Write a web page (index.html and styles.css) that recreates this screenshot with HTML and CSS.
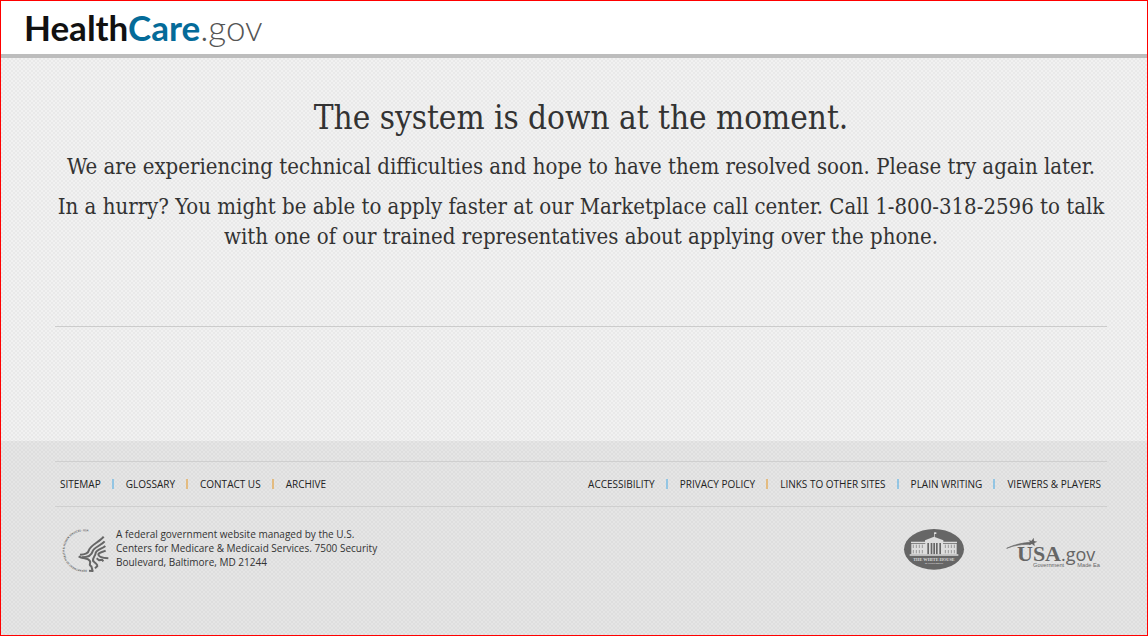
FILE: index.html
```
<!DOCTYPE html>
<html lang="en">
  <head>
    <meta charset="utf-8" />
    <title>HealthCare.gov</title>
    <meta name="viewport" content="width=device-width, initial-scale=1" />
    <link rel="stylesheet" href="styles.css">
  </head>
  <body>
    <header class="header">
      <a class="logo" href="#"><span class="logo-health">Health</span><span class="logo-care">Care</span><span class="logo-gov">.gov</span></a>
    </header>

    <main class="main">
      <div class="message">
        <h1>The system is down at the moment.</h1>
        <p>We are experiencing technical difficulties and hope to have them resolved soon. Please try again later.</p>
        <p>In a hurry? You might be able to apply faster at our Marketplace call center. Call 1-800-318-2596 to talk with one of our trained representatives about applying over the phone.</p>
      </div>
    </main>

    <footer class="footer">
      <nav class="footer-nav">
        <ul class="links">
          <li><a href="#">Sitemap</a></li>
          <li><a href="#">Glossary</a></li>
          <li class="orange"><a href="#">Contact Us</a></li>
          <li class="orange"><a href="#">Archive</a></li>
        </ul>
        <ul class="links">
          <li><a href="#">Accessibility</a></li>
          <li><a href="#">Privacy Policy</a></li>
          <li class="orange"><a href="#">Links to Other Sites</a></li>
          <li><a href="#">Plain Writing</a></li>
          <li><a href="#">Viewers &amp; Players</a></li>
        </ul>
      </nav>

      <div class="footer-info">
        <!-- HHS seal -->
        <svg class="hhs" viewBox="36 36 144 138" role="img" aria-label="Department of Health and Human Services">
          <path id="ring" d="M110 164 A58 58 0 1 1 146 69" fill="none" />
          <text class="ring-text"><textPath href="#ring">DEPARTMENT OF HEALTH &amp; HUMAN SERVICES · USA</textPath></text>
          <g fill="none" stroke="#666" stroke-width="6" stroke-linejoin="round">
            <path d="M161 65 C150 80 121 91 117 105 C115 114 109 119 90 119" />
            <path d="M164 79 C154 91 131 97 128 109 C125 122 116 127 96 127" />
            <path d="M166 93 C157 101 139 105 137 114 C136 124 126 130 129 139" />
            <path d="M167 107 C158 111 147 111 145 118 C145 125 151 129 175 130" />
            <path d="M86 124 C98 132 113 127 119 137 C125 145 113 149 124 154 L128 168 L117 167" />
            <path d="M129 136 C134 146 142 145 142 153 L135 160 M140 130 L147 136 L156 134 L160 139" />
          </g>
        </svg>
        <p class="address">A federal government website managed by the U.S. Centers for Medicare &amp; Medicaid Services. 7500 Security Boulevard, Baltimore, MD 21244</p>

        <!-- White House -->
        <a class="white-house" href="#" aria-label="The White House">
          <svg viewBox="27 28 180 123">
            <ellipse cx="117" cy="89" rx="90" ry="61" fill="#666" />
            <g fill="#ddd">
              <path d="M118 38 h6 v5 h-5 v10 h-2 v-14 z" />
              <path d="M90 62 L117 51 L145 62 V68 H90 Z" />
              <path d="M48 66 H186 V70 H48 Z M49 72 H93 V104 H49 Z M141 72 H185 V104 H141 Z" />
              <path d="M91 68 H97 V104 H91 Z M102 68 H107 V104 H102 Z M112 68 H115 V104 H112 Z M120 68 H123 V104 H120 Z M128 68 H133 V104 H128 Z M138 68 H144 V104 H138 Z" />
              <path d="M44 104 H190 V108 H44 Z" />
            </g>
            <path d="M55 75 V85 M64 75 V85 M73 75 V85 M82 75 V85 M55 91 V101 M64 91 V101 M73 91 V101 M82 91 V101 M151 75 V85 M160 75 V85 M169 75 V85 M178 75 V85 M151 91 V101 M160 91 V101 M169 91 V101 M178 91 V101" stroke="#999" stroke-width="3" />
            <text x="117" y="123" class="wh-name">THE WHITE HOUSE</text>
            <text x="117" y="134" class="wh-city">WASHINGTON</text>
          </svg>
        </a>

        <!-- USA.gov -->
        <a class="usa-gov" href="#" aria-label="USA.gov">
          <svg viewBox="18 24 285 90">
            <path d="M20 55 C45 43 70 38 94 37 L91 43 C65 42 43 46 20 55 Z" fill="#666" stroke="#666" stroke-width="2" />
            <path d="M101 23 L102 33 L112 35 L103 39 L104 49 L96 42 L87 46 L91 37 L85 31 L95 32 Z" fill="#666" />
            <text x="51" y="93" class="usa">USA</text>
            <text x="183" y="93" class="gov">.gov</text>
            <text x="99" y="110" class="tagline">Government</text>
            <text x="232" y="110" class="tagline">Made Ea</text>
          </svg>
        </a>
      </div>
    </footer>
  </body>
</html>
```

FILE: styles.css
```
* {
  padding: 0;
  margin: 0;
  box-sizing: border-box;
}
body {
  display: flex;
  flex-direction: column;
  min-height: 100vh;
  border: 1px solid #ff0000;
  background-color: #f1f1f1;
  color: #333333;
  font-family: "Open Sans", sans-serif;
}
a {
  color: inherit;
  text-decoration: none;
}
.header {
  height: 57px;
  padding: 6px 23px 0;
  background-color: #ffffff;
  border-bottom: 4px solid #bdbdbd;
}
.logo {
  display: block;
  font-family: Lato, sans-serif;
  font-size: 35px;
  line-height: 40px;
}
.logo-health {
  color: #111111;
  font-weight: 700;
}
.logo-care {
  color: #046b99;
  font-weight: 700;
}
.logo-gov {
  color: #555555;
  font-weight: 300;
}
/* fine woven texture */
.main,
.footer {
  background-image: repeating-conic-gradient(rgba(0, 0, 0, 0.03) 0 25%, transparent 0 50%);
  background-size: 4px 4px;
}
.main {
  padding: 36px 40px 114px 54px;
}
.message {
  padding-bottom: 74px;
  border-bottom: 1px solid #cccccc;
  font-family: "DejaVu Serif Condensed", "DejaVu Serif", serif;
  font-stretch: condensed;
  text-align: center;
}
h1 {
  font-size: 33px;
  line-height: 48px;
  font-weight: 400;
  margin-bottom: 10px;
}
.message p {
  font-size: 22px;
  line-height: 30px;
}
.message p + p {
  margin-top: 10px;
}
.footer {
  flex: 1;
  padding: 20px 40px 20px 54px;
  background-color: #e5e5e5;
}
.footer-nav {
  display: flex;
  justify-content: space-between;
  padding: 15px 6px 15px 5px;
  border-top: 1px solid #cfcfcf;
  border-bottom: 1px solid #cfcfcf;
}
.links {
  display: flex;
  list-style: none;
  color: #222222;
  font-size: 10px;
  line-height: 14px;
  text-transform: uppercase;
}
.links li + li::before {
  content: "";
  display: inline-block;
  width: 2px;
  height: 10px;
  margin: 0 12px 0 11px;
  vertical-align: -1px;
  background-color: #93c5e3;
}
.links li.orange::before {
  background-color: #e3bb80;
}
.footer-info {
  display: flex;
  align-items: flex-start;
  padding: 20px 6px 0 5px;
}
.footer-info svg {
  display: block;
  width: 100%;
  overflow: visible;
}
.footer-info .hhs {
  width: 48px;
  margin: 0 6px 0 2px;
}
.ring-text {
  font-size: 8px;
  font-weight: 700;
  fill: #666666;
}
.address {
  width: 274px;
  font-size: 10px;
  line-height: 14px;
}
.white-house {
  width: 60px;
  margin: 2px 42px 0 auto;
}
.wh-name,
.wh-city {
  font-family: "Liberation Serif", serif;
  font-weight: 700;
  text-anchor: middle;
  fill: #dddddd;
}
.wh-name {
  font-size: 13px;
}
.wh-city {
  font-size: 8px;
}
.usa-gov {
  width: 95px;
  margin-top: 11px;
}
.usa-gov text {
  fill: #666666;
}
.usa {
  font-family: "Liberation Serif", serif;
  font-size: 66px;
  font-weight: 700;
}
.gov {
  font-family: "Open Sans", sans-serif;
  font-size: 54px;
}
.usa-gov .tagline {
  font-family: "Liberation Sans", sans-serif;
  font-size: 17px;
}
```
